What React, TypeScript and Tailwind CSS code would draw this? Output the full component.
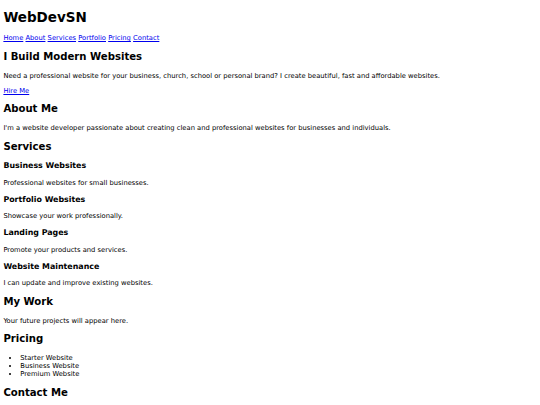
import React from 'react';

// Plain document look, scaled to the 540px viewport (1280 → 540)
const services = [
  { title: 'Business Websites', text: 'Professional websites for small businesses.' },
  { title: 'Portfolio Websites', text: 'Showcase your work professionally.' },
  { title: 'Landing Pages', text: 'Promote your products and services.' },
  { title: 'Website Maintenance', text: 'I can update and improve existing websites.' },
];

const navLinks = ['Home', 'About', 'Services', 'Portfolio', 'Pricing', 'Contact'];

const linkCls = 'text-[#0000ee] underline';
const h2Cls = 'text-[10.125px] font-bold my-[8.4px]';
const pCls = 'my-[6.75px]';

const App: React.FC = () => {
  return (
    <div className="flow-root min-h-screen bg-white text-black font-['DejaVu_Sans',Verdana,sans-serif] text-[6.75px] leading-[1.215] px-[3.375px]">
      <header>
        <h1 className="text-[13.5px] font-bold my-[9.045px]">WebDevSN</h1>
        <nav>
          {navLinks.map((l, i) => (
            <React.Fragment key={l}>
              <a href={`#${l.toLowerCase()}`} className={linkCls}>{l}</a>
              {i < navLinks.length - 1 ? ' ' : ''}
            </React.Fragment>
          ))}
        </nav>
      </header>

      <section id="home">
        <h2 className={h2Cls}>I Build Modern Websites</h2>
        <p className={pCls}>
          Need a professional website for your business, church, school or personal brand? I create beautiful, fast and affordable websites.
        </p>
        <a href="#contact" className={linkCls}>Hire Me</a>
      </section>

      <section id="about">
        <h2 className={h2Cls}>About Me</h2>
        <p className={pCls}>
          I&apos;m a website developer passionate about creating clean and professional websites for businesses and individuals.
        </p>
      </section>

      <section id="services">
        <h2 className={h2Cls}>Services</h2>
        {services.map((s) => (
          <div key={s.title}>
            <h3 className="text-[7.9px] font-bold my-[7.9px]">{s.title}</h3>
            <p className={pCls}>{s.text}</p>
          </div>
        ))}
      </section>

      <section id="portfolio">
        <h2 className={h2Cls}>My Work</h2>
        <p className={pCls}>Your future projects will appear here.</p>
      </section>

      <section id="pricing">
        <h2 className={h2Cls}>Pricing</h2>
        <ul className="list-disc pl-[16.875px] my-[6.75px]">
          <li>Starter Website</li>
          <li>Business Website</li>
          <li>Premium Website</li>
        </ul>
      </section>

      <section id="contact">
        <h2 className={h2Cls}>Contact Me</h2>
      </section>
    </div>
  );
};

export default App;
